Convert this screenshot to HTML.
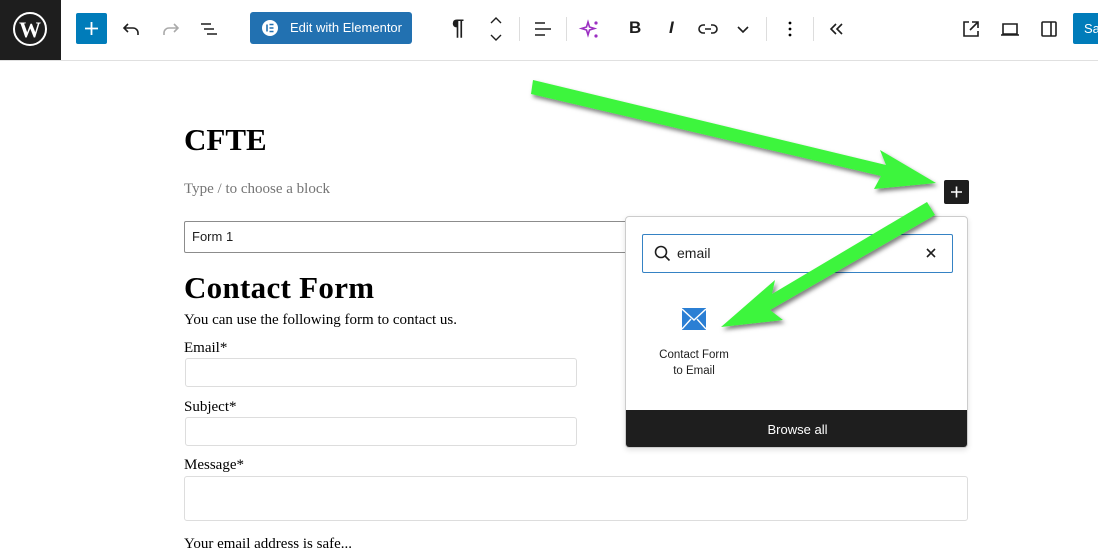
<!DOCTYPE html>
<html><head><meta charset="utf-8"><style>
*{box-sizing:border-box;margin:0;padding:0}
body{width:1098px;height:540px;overflow:hidden;background:#fff;font-family:"Liberation Sans",sans-serif;position:relative}
.tb{position:absolute;left:0;top:0;width:1098px;height:61px;border-bottom:1px solid #e0e0e0;background:#fff}
.wp{position:absolute;left:0;top:0;width:61px;height:60px;background:#1e1e1e}
.abs{position:absolute}
.serif{font-family:"Liberation Serif",serif;color:#000}
.inp{position:absolute;border:1px solid #ddd;border-radius:3px;background:#fff}
.sep{position:absolute;top:17px;width:1px;height:24px;background:#ddd}
</style></head><body>
<div class="tb">
 <div class="wp"><svg width="61" height="60" viewBox="0 0 61 60"><circle cx="30" cy="29" r="16" fill="none" stroke="#fff" stroke-width="2"/><text x="30" y="37" font-family="Liberation Serif" font-weight="bold" font-size="22" fill="#fff" text-anchor="middle">W</text></svg></div>
 <div class="abs" style="left:76px;top:13px;width:31px;height:31px;background:#007cba;border-radius:2px"><svg width="31" height="31"><path d="M15.5 9v13M9 15.5h13" stroke="#fff" stroke-width="1.8"/></svg></div>
 <svg class="abs" style="left:120px;top:17px" width="24" height="24"><path d="M8 7L4 11l4 4M4 11h9a5 5 0 0 1 5 5v2" fill="none" stroke="#1e1e1e" stroke-width="1.6"/></svg>
 <svg class="abs" style="left:158px;top:17px" width="24" height="24"><path d="M16 7l4 4-4 4M20 11h-9a5 5 0 0 0-5 5v2" fill="none" stroke="#aaa" stroke-width="1.6"/></svg>
 <svg class="abs" style="left:197px;top:17px" width="24" height="24"><path d="M4 7h10M7 12h10M10 17h10" stroke="#1e1e1e" stroke-width="1.6"/></svg>
 <div class="abs" style="left:250px;top:12px;width:162px;height:32px;background:#2271b1;border-radius:3px;color:#fff;font-size:13px;line-height:32px;padding-left:40px">Edit with Elementor
  <svg class="abs" style="left:12px;top:8px" width="16" height="16"><circle cx="8" cy="8" r="8" fill="#fff"/><path d="M5 4.5v7M7.5 4.5h4M7.5 8h4M7.5 11.5h4" stroke="#2271b1" stroke-width="1.6"/></svg></div>
 <div class="abs" style="left:452px;top:15px;font-size:22px;font-weight:bold;color:#1e1e1e">¶</div>
 <svg class="abs" style="left:486px;top:14px" width="20" height="30"><path d="M5 9l5-5 5 5M5 21l5 5 5-5" fill="none" stroke="#1e1e1e" stroke-width="1.4"/></svg>
 <div class="sep" style="left:519px"></div>
 <svg class="abs" style="left:531px;top:17px" width="24" height="24"><path d="M4 6h10M4 12h16M4 18h10" stroke="#1e1e1e" stroke-width="1.6"/></svg>
 <div class="sep" style="left:566px"></div>
 <svg class="abs" style="left:578px;top:18px" width="24" height="24"><path d="M10 4l1.5 5 5 1.5-5 1.5L10 17l-1.5-5-5-1.5 5-1.5z" fill="none" stroke="#9b2fc2" stroke-width="1.6"/><circle cx="18" cy="5" r="1.6" fill="#9b2fc2"/><circle cx="18" cy="18" r="1.6" fill="#9b2fc2"/></svg>
 <div class="abs" style="left:629px;top:18px;font-size:17px;font-weight:bold;color:#1e1e1e">B</div>
 <div class="abs" style="left:669px;top:18px;font-size:17px;font-style:italic;font-weight:bold;color:#1e1e1e">I</div>
 <svg class="abs" style="left:696px;top:17px" width="24" height="24"><path d="M9 8H7a4 4 0 0 0 0 8h2M15 8h2a4 4 0 0 1 0 8h-2M9 12h6" fill="none" stroke="#1e1e1e" stroke-width="1.6"/></svg>
 <svg class="abs" style="left:731px;top:17px" width="24" height="24"><path d="M7 10l5 5 5-5" fill="none" stroke="#1e1e1e" stroke-width="1.6"/></svg>
 <div class="sep" style="left:766px"></div>
 <svg class="abs" style="left:778px;top:17px" width="24" height="24"><circle cx="12" cy="6" r="1.4"/><circle cx="12" cy="12" r="1.4"/><circle cx="12" cy="18" r="1.4"/></svg>
 <div class="sep" style="left:813px"></div>
 <svg class="abs" style="left:825px;top:17px" width="24" height="24"><path d="M11 7l-5 5 5 5M17 7l-5 5 5 5" fill="none" stroke="#1e1e1e" stroke-width="1.6"/></svg>
 <svg class="abs" style="left:959px;top:17px" width="24" height="24"><path d="M10 5H5v14h14v-5M13 5h6v6M19 5l-8 8" fill="none" stroke="#1e1e1e" stroke-width="1.6"/></svg>
 <svg class="abs" style="left:998px;top:17px" width="24" height="24"><path d="M5 7h14v10H5zM3 18h18" fill="none" stroke="#1e1e1e" stroke-width="1.6"/></svg>
 <svg class="abs" style="left:1037px;top:17px" width="24" height="24"><rect x="5" y="5" width="14" height="14" rx="1" fill="none" stroke="#1e1e1e" stroke-width="1.6"/><path d="M14 5v14" stroke="#1e1e1e" stroke-width="1.6"/></svg>
 <div class="abs" style="left:1073px;top:13px;width:40px;height:31px;background:#007cba;border-radius:2px;color:#fff;font-size:13px;line-height:31px;padding-left:11px">Save</div>
</div>

<div class="abs serif" style="left:184px;top:122px;font-size:31px;font-weight:bold">CFTE</div>
<div class="abs serif" style="left:184px;top:181px;font-size:15px;color:#757575">Type / to choose a block</div>
<div class="abs" style="left:184px;top:221px;width:500px;height:32px;border:1px solid #8c8c8c;border-radius:2px;font-size:13px;line-height:30px;padding-left:7px;color:#1e1e1e">Form 1</div>
<div class="abs serif" style="left:184px;top:270px;font-size:31px;font-weight:bold;letter-spacing:0.3px">Contact Form</div>
<div class="abs serif" style="left:184px;top:312px;font-size:15px">You can use the following form to contact us.</div>
<div class="abs serif" style="left:184px;top:340px;font-size:15px">Email*</div>
<div class="inp" style="left:185px;top:358px;width:392px;height:29px"></div>
<div class="abs serif" style="left:184px;top:399px;font-size:15px">Subject*</div>
<div class="inp" style="left:185px;top:417px;width:392px;height:29px"></div>
<div class="abs serif" style="left:184px;top:457px;font-size:15px">Message*</div>
<div class="inp" style="left:184px;top:476px;width:784px;height:45px"></div>
<div class="abs serif" style="left:184px;top:536px;font-size:15px">Your email address is safe...</div>

<div class="abs" style="left:944px;top:180px;width:25px;height:24px;background:#1e1e1e;border-radius:2px"><svg width="25" height="24"><path d="M12.5 6.5v11M7 12h11" stroke="#fff" stroke-width="1.6"/></svg></div>

<div class="abs" style="left:625px;top:216px;width:343px;height:232px;background:#fff;border:1px solid #ccc;border-radius:4px;box-shadow:0 2px 6px rgba(0,0,0,.12);overflow:hidden">
 <div class="abs" style="left:16px;top:17px;width:311px;height:39px;border:1.5px solid #3582c4;border-radius:2px;font-size:14px;line-height:36px;padding-left:34px;color:#1e1e1e">email
  <svg class="abs" style="left:10px;top:9px" width="20" height="20"><circle cx="8" cy="8" r="5.5" fill="none" stroke="#1e1e1e" stroke-width="1.6"/><path d="M12 12l4.5 4.5" stroke="#1e1e1e" stroke-width="1.6"/></svg>
  <svg class="abs" style="left:280px;top:10px" width="16" height="16"><path d="M4 4l8 8M12 4l-8 8" stroke="#1e1e1e" stroke-width="1.6"/></svg></div>
 <svg class="abs" style="left:56px;top:91px" width="24" height="22"><rect width="24" height="22" fill="#2b7fd4"/><path d="M0 1l12 11L24 1M0 21l9-10M24 21l-9-10" fill="none" stroke="#fff" stroke-width="1.4"/></svg>
 <div class="abs" style="left:20px;top:130px;width:96px;text-align:center;font-size:11.5px;line-height:16px;color:#1e1e1e">Contact Form<br>to Email</div>
 <div class="abs" style="left:0;top:193px;width:343px;height:39px;background:#1e1e1e;color:#fff;font-size:13px;line-height:40px;text-align:center">Browse all</div>
</div>

<svg class="abs" style="left:0;top:0" width="1098" height="540">
 <defs><filter id="s"><feDropShadow dx="2" dy="3" stdDeviation="2" flood-opacity=".5"/></filter></defs>
 <g fill="#3cf53c" filter="url(#s)">
  <polygon points="533,80 886,165 880,150 936,183 874,189 881,176 531,94"/>
  <polygon points="927,202 772,294 775,280 721,327 783,320 770,310 935,215"/>
 </g>
</svg>
</body></html>
